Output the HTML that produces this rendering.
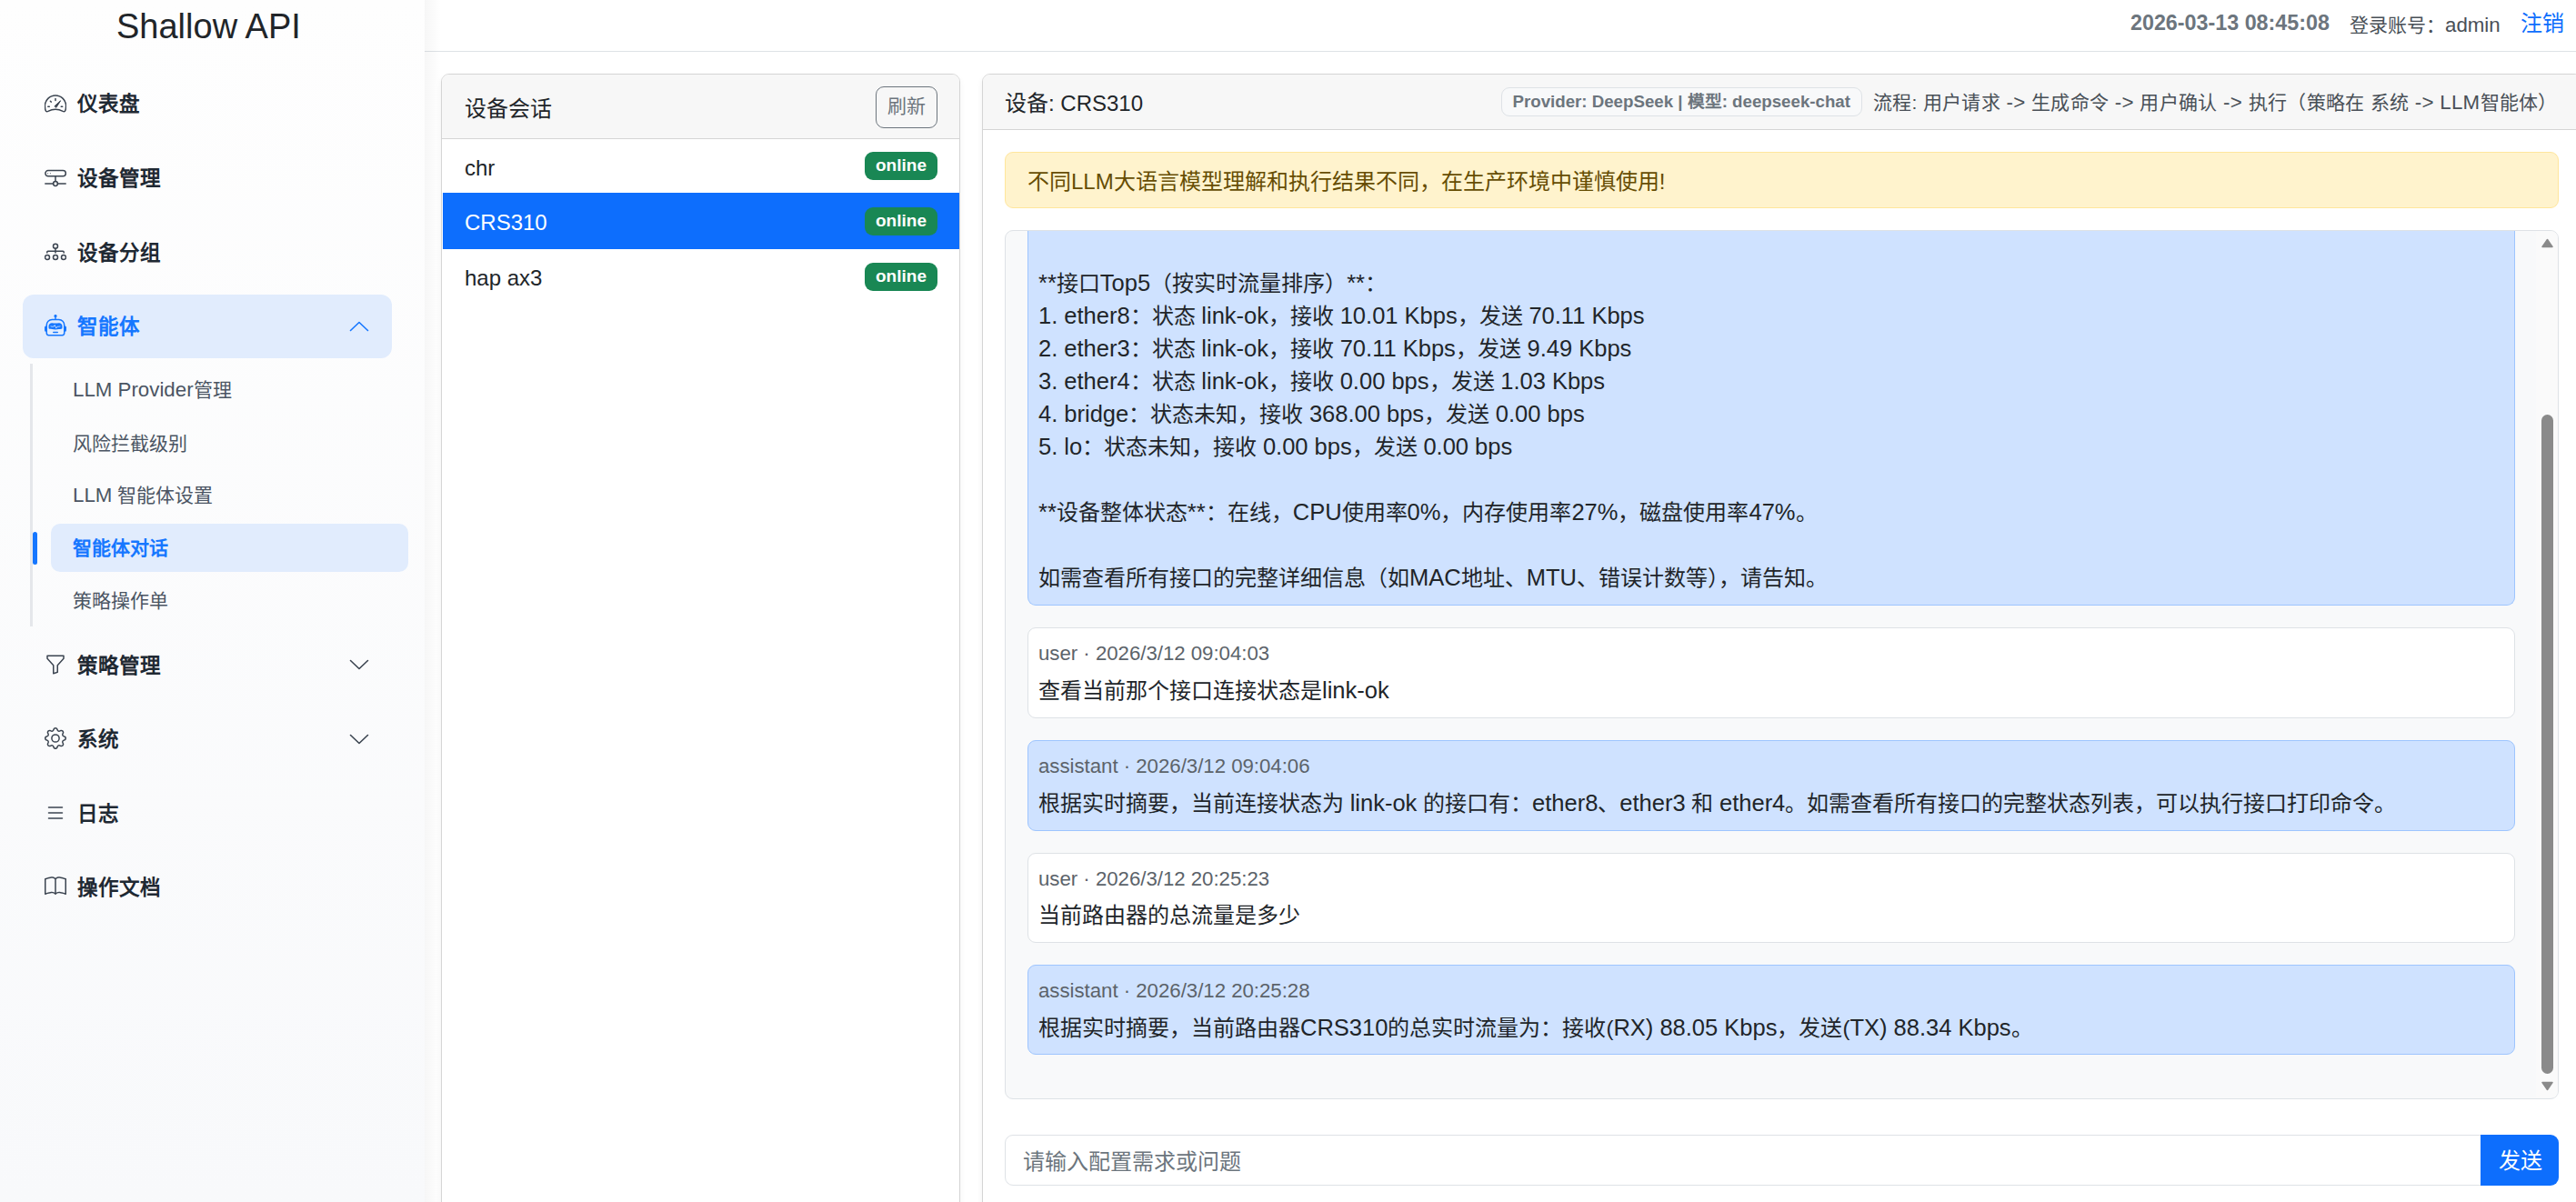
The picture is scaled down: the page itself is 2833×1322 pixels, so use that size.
<!DOCTYPE html>
<html lang="zh-CN"><head><meta charset="utf-8">
<style>
*{box-sizing:border-box;margin:0;padding:0}
html,body{width:2833px;height:1322px;overflow:hidden;background:#fff;font-family:"Liberation Sans",sans-serif;color:#212529}
.a{position:absolute}
.t{position:absolute;white-space:nowrap;line-height:1}
#sidebar{left:0;top:0;width:467px;height:1322px;background:linear-gradient(#fefefe,#f8f9fb)}
.nav{font-weight:bold;font-size:22.5px;color:#1f2933;left:85.3px}
.ico{position:absolute;left:49px;width:24px;height:24px;fill:none;stroke:#3b4450;stroke-width:1.5;stroke-linecap:round;stroke-linejoin:round}
.chev{position:absolute;left:384px;width:22px;height:12px;fill:none;stroke:#3b4450;stroke-width:1.6;stroke-linecap:round;stroke-linejoin:round}
.sub{font-size:21px;color:#4b5563;left:80px}
#header{left:467px;top:0;width:2366px;height:57px;background:#fff;border-bottom:1px solid #dee2e6}
.card{position:absolute;border:1.5px solid #d5d5d5;border-radius:9px;background:#fff;box-shadow:0 3px 6px rgba(0,0,0,.06);overflow:hidden}
.chd{position:absolute;left:0;top:0;right:0;background:#f7f7f7;border-bottom:1.5px solid #d5d5d5}
.badge{position:absolute;left:951px;width:80px;height:31px;background:#198754;border-radius:9px}
.badge span{position:absolute;left:12px;top:5px;font-weight:bold;font-size:19px;color:#fff;line-height:1;white-space:nowrap}
.row{position:absolute;left:1.5px;right:0;height:61px}
.msg{position:absolute;left:1130px;width:1636px;border:1.5px solid #9ec5fe;background:#cfe2ff;border-radius:9px}
.msg.u{background:#fff;border-color:#dee2e6}
.meta{position:absolute;left:11px;top:17px;font-size:22.2px;color:#5c636a;white-space:nowrap;line-height:1}
.l{font-size:1.0625em;line-height:0}
.bd{position:absolute;left:11px;top:56.5px;font-size:24px;color:#212529;white-space:nowrap;line-height:1}
</style></head><body>
<div id="sidebar" class="a">
  <div class="t" style="left:128px;top:10px;font-size:38px;color:#212529">Shallow API</div>

  <svg class="ico" style="top:102px" viewBox="0 0 24 24"><path d="M1.6 20.2C.6 18.8.4 16.6.4 14.6A11.6 11.6 0 0 1 23.6 14.6c0 2-.2 4.2-1.2 5.6-.6.6-1.4.6-2.2.2C17.6 19 15 18.2 12 18.2s-5.6.8-8.2 2.2c-.8.4-1.6.4-2.2-.2z"/><path d="M12 6.6v2M6.4 9.3l.9.8M3.8 15.3h1.5M18.2 15.3h1.5"/><path d="M11.2 14.6 17.6 8.8 13 16z" fill="#3b4450" stroke-width="1"/></svg>
  <div class="t nav" style="top:104px">仪表盘</div>

  <svg class="ico" style="top:183px" viewBox="0 0 24 24"><rect x="0.9" y="4.6" width="22.4" height="6.2" rx="3"/><circle cx="3.6" cy="7.7" r=".55" fill="#3b4450" stroke="none"/><circle cx="6.4" cy="7.7" r=".55" fill="#3b4450" stroke="none"/><path d="M12 10.8v5.6M.8 19h8.8M14.4 19h8.8"/><circle cx="12" cy="19" r="2.4"/></svg>
  <div class="t nav" style="top:185.5px">设备管理</div>

  <svg class="ico" style="top:265px" viewBox="0 0 24 24"><circle cx="12" cy="5.8" r="2.5"/><path d="M12 8.3v4.6M2.8 13v-.8a1 1 0 0 1 1-1h16.4a1 1 0 0 1 1 1v.8"/><circle cx="3" cy="18" r="2.5"/><circle cx="12" cy="18" r="2.5"/><circle cx="21" cy="18" r="2.5"/></svg>
  <div class="t nav" style="top:267.5px">设备分组</div>

  <div class="a" style="left:25px;top:324px;width:406px;height:70px;background:#e1ecfd;border-radius:12px"></div>
  <svg class="ico" style="top:346px;height:25px;fill:#1677ff;stroke:none" viewBox="0 0 16 16" preserveAspectRatio="none"><path d="M6 12.5a.5.5 0 0 1 .5-.5h3a.5.5 0 0 1 0 1h-3a.5.5 0 0 1-.5-.5M3 8.062C3 6.76 4.235 5.765 5.53 5.886a26.6 26.6 0 0 0 4.94 0C11.765 5.765 13 6.76 13 8.062v1.157a.93.93 0 0 1-.765.935c-.845.147-2.34.346-4.235.346s-3.39-.2-4.235-.346A.93.93 0 0 1 3 9.219zm4.542-.827a.25.25 0 0 0-.217.068l-.92.9a25 25 0 0 1-1.871-.183.25.25 0 0 0-.068.495c.55.076 1.232.149 2.02.193a.25.25 0 0 0 .189-.071l.754-.736.847 1.71a.25.25 0 0 0 .404.062l.932-.97a25 25 0 0 0 1.922-.188.25.25 0 0 0-.068-.495c-.538.074-1.207.145-1.98.189a.25.25 0 0 0-.166.076l-.754.785-.842-1.7a.25.25 0 0 0-.182-.135"/><path d="M8.5 1.866a1 1 0 1 0-1 0V3h-2A4.5 4.5 0 0 0 1 7.5V8a1 1 0 0 0-1 1v2a1 1 0 0 0 1 1v1a2 2 0 0 0 2 2h10a2 2 0 0 0 2-2v-1a1 1 0 0 0 1-1V9a1 1 0 0 0-1-1v-.5A4.5 4.5 0 0 0 10.5 3h-2zM14 7.5V13a1 1 0 0 1-1 1H3a1 1 0 0 1-1-1V7.5A3.5 3.5 0 0 1 5.5 4h5A3.5 3.5 0 0 1 14 7.5"/></svg>
  <div class="t nav" style="top:349px;color:#1677ff">智能体</div>
  <svg class="chev" style="top:353px;stroke:#1677ff" viewBox="0 0 22 12"><path d="M1.5 10.5 11 1.5l9.5 9"/></svg>

  <div class="a" style="left:33px;top:400px;width:3px;height:289px;background:#e5e7eb"></div>
  <div class="t sub" style="top:418px"><span class="l">LLM Provider</span>管理</div>
  <div class="t sub" style="top:476.5px">风险拦截级别</div>
  <div class="t sub" style="top:534px"><span class="l">LLM</span> 智能体设置</div>
  <div class="a" style="left:56px;top:576px;width:393px;height:53px;background:#e1ecfd;border-radius:10px"></div>
  <div class="a" style="left:36px;top:585px;width:5px;height:36px;background:#1677ff;border-radius:3px"></div>
  <div class="t sub" style="top:592px;color:#1677ff;font-weight:bold">智能体对话</div>
  <div class="t sub" style="top:650px">策略操作单</div>

  <svg class="ico" style="top:719.2px;fill:#3b4450;stroke:none" viewBox="0 0 16 16"><path d="M1.5 1.5A.5.5 0 0 1 2 1h12a.5.5 0 0 1 .5.5v2a.5.5 0 0 1-.128.334L10 8.692V13.5a.5.5 0 0 1-.342.474l-3 1A.5.5 0 0 1 6 14.5V8.692L1.628 3.834A.5.5 0 0 1 1.5 3.5zm1 .5v1.308l4.372 4.858A.5.5 0 0 1 7 8.5v5.306l2-.666V8.5a.5.5 0 0 1 .128-.334L13.5 3.308V2z"/></svg>
  <div class="t nav" style="top:721.5px">策略管理</div>
  <svg class="chev" style="top:725px" viewBox="0 0 22 12"><path d="M1.5 1.5 11 10.5l9.5-9"/></svg>

  <svg class="ico" style="top:800px;fill:#3b4450;stroke:none" viewBox="0 0 16 16"><path d="M8 4.754a3.246 3.246 0 1 0 0 6.492 3.246 3.246 0 0 0 0-6.492M5.754 8a2.246 2.246 0 1 1 4.492 0 2.246 2.246 0 0 1-4.492 0"/><path d="M9.796 1.343c-.527-1.79-3.065-1.79-3.592 0l-.094.319a.873.873 0 0 1-1.255.52l-.292-.16c-1.64-.892-3.433.902-2.54 2.541l.159.292a.873.873 0 0 1-.52 1.255l-.319.094c-1.79.527-1.790 3.065 0 3.592l.319.094a.873.873 0 0 1 .52 1.255l-.16.292c-.892 1.64.901 3.434 2.541 2.54l.292-.159a.873.873 0 0 1 1.255.52l.094.319c.527 1.79 3.065 1.79 3.592 0l.094-.319a.873.873 0 0 1 1.255-.52l.292.16c1.64.893 3.434-.902 2.54-2.541l-.159-.292a.873.873 0 0 1 .52-1.255l.319-.094c1.79-.527 1.79-3.065 0-3.592l-.319-.094a.873.873 0 0 1-.52-1.255l.16-.292c.893-1.64-.902-3.433-2.541-2.54l-.292.159a.873.873 0 0 1-1.255-.52zm-2.633.283c.246-.835 1.428-.835 1.674 0l.094.319a1.873 1.873 0 0 0 2.693 1.115l.291-.16c.764-.415 1.6.42 1.184 1.185l-.159.292a1.873 1.873 0 0 0 1.116 2.692l.318.094c.835.246.835 1.428 0 1.674l-.319.094a1.873 1.873 0 0 0-1.115 2.693l.16.291c.415.764-.42 1.6-1.185 1.184l-.291-.159a1.873 1.873 0 0 0-2.693 1.116l-.094.318c-.246.835-1.428.835-1.674 0l-.094-.319a1.873 1.873 0 0 0-2.692-1.115l-.292.16c-.764.415-1.6-.42-1.184-1.185l.159-.291A1.873 1.873 0 0 0 1.945 8.930l-.319-.094c-.835-.246-.835-1.428 0-1.674l.319-.094A1.873 1.873 0 0 0 3.060 4.377l-.16-.292c-.415-.764.42-1.6 1.185-1.184l.292.159a1.873 1.873 0 0 0 2.692-1.115z"/></svg>
  <div class="t nav" style="top:803px">系统</div>
  <svg class="chev" style="top:806.5px" viewBox="0 0 22 12"><path d="M1.5 1.5 11 10.5l9.5-9"/></svg>

  <svg class="ico" style="top:882px;fill:#3b4450;stroke:none" viewBox="0 0 16 16"><path fill-rule="evenodd" d="M2.5 12a.5.5 0 0 1 .5-.5h10a.5.5 0 0 1 0 1H3a.5.5 0 0 1-.5-.5m0-4a.5.5 0 0 1 .5-.5h10a.5.5 0 0 1 0 1H3a.5.5 0 0 1-.5-.5m0-4a.5.5 0 0 1 .5-.5h10a.5.5 0 0 1 0 1H3a.5.5 0 0 1-.5-.5"/></svg>
  <div class="t nav" style="top:884.5px">日志</div>

  <svg class="ico" style="top:962.8px;fill:#3b4450;stroke:none" viewBox="0 0 16 16"><path d="M1 2.828c.885-.37 2.154-.769 3.388-.893 1.33-.134 2.458.063 3.112.752v9.746c-.935-.53-2.12-.603-3.213-.493-1.18.12-2.37.461-3.287.811zm7.5-.141c.654-.689 1.782-.886 3.112-.752 1.234.124 2.503.523 3.388.893v9.923c-.918-.35-2.107-.692-3.287-.81-1.094-.111-2.278-.039-3.213.492zM8 1.783C7.015.936 5.587.81 4.287.94c-1.514.153-3.042.672-3.994 1.105A.5.5 0 0 0 0 2.5v11a.5.5 0 0 0 .707.455c.882-.4 2.303-.881 3.68-1.02 1.409-.142 2.59.087 3.223.877a.5.5 0 0 0 .78 0c.633-.79 1.814-1.019 3.222-.877 1.378.139 2.8.62 3.681 1.02A.5.5 0 0 0 16 13.5v-11a.5.5 0 0 0-.293-.455c-.952-.433-2.48-.952-3.994-1.105C10.413.809 8.985.936 8 1.783"/></svg>
  <div class="t nav" style="top:965.5px">操作文档</div>
</div>

<div class="a" style="left:467px;top:0;width:18px;height:1322px;background:linear-gradient(to right,rgba(0,0,0,.035),rgba(0,0,0,0));z-index:5"></div>
<div id="header" class="a">
  <div class="t" style="left:1876px;top:14.3px;font-size:23.3px;font-weight:bold;color:#6c757d">2026-03-13 08:45:08</div>
  <div class="t" style="left:2117px;top:17px;font-size:21px;color:#495057">登录账号：<span class="l">admin</span></div>
  <div class="t" style="left:2305px;top:14.3px;font-size:24px;color:#0d6efd">注销</div>
</div>

<!-- left card -->
<div class="card" style="left:485px;top:81px;width:571px;height:1300px">
  <div class="chd" style="height:71px"></div>
  <div class="t" style="left:24.5px;top:26px;font-size:24px">设备会话</div>
  <div class="a" style="left:477px;top:12.5px;width:68px;height:46px;border:1.5px solid #6c757d;border-radius:9px"></div>
  <div class="t" style="left:489.5px;top:23.5px;font-size:21px;color:#6c757d">刷新</div>
</div>
<div class="row a" style="left:486.5px;top:152px;width:568px;height:60px"></div>
<div class="t" style="left:511px;top:173px;font-size:24px">chr</div>
<div class="a" style="left:486.5px;top:212px;width:568px;height:62px;background:#0d6efd"></div>
<div class="t" style="left:511px;top:233px;font-size:24px;color:#fff">CRS310</div>
<div class="t" style="left:511px;top:294px;font-size:24px">hap ax3</div>
<div class="badge" style="top:167px"><span>online</span></div>
<div class="badge" style="top:228px"><span>online</span></div>
<div class="badge" style="top:289px"><span>online</span></div>

<!-- right card -->
<div class="card" style="left:1080px;top:81px;width:1760px;height:1300px">
  <div class="chd" style="height:60.5px"></div>
</div>
<div class="t" style="left:1105px;top:101.5px;font-size:24px">设备: CRS310</div>
<div class="a" style="left:1650.5px;top:96px;width:397px;height:31.5px;background:#f8f9fa;border:1.5px solid #dee2e6;border-radius:9px"></div>
<div class="t" style="left:1663.5px;top:103px;font-size:18.7px;font-weight:bold;color:#6c757d">Provider: DeepSeek | 模型: deepseek-chat</div>
<div class="t" style="left:2060px;top:102px;font-size:21px;letter-spacing:0.3px;color:#495057">流程: 用户请求<span class="l"> -&gt; </span>生成命令<span class="l"> -&gt; </span>用户确认<span class="l"> -&gt; </span>执行（策略在 系统<span class="l"> -&gt; </span><span class="l">LLM</span>智能体）</div>

<div class="a" style="left:1105px;top:167px;width:1709px;height:62px;background:#fff3cd;border:1.5px solid #ffe69c;border-radius:9px"></div>
<div class="t" style="left:1130px;top:187.5px;font-size:24px;color:#664d03">不同LLM大语言模型理解和执行结果不同，在生产环境中谨慎使用!</div>

<!-- messages container -->
<div class="a" style="left:1105px;top:253px;width:1709px;height:956px;background:#f8f9fa;border:1.5px solid #dee2e6;border-radius:9px;overflow:hidden">
  <div class="a" style="left:1683px;top:0;width:24px;height:953px;background:#fafafa"></div>
</div>
<div class="msg" style="top:220px;height:446px;border-top:none;border-radius:0 0 9px 9px;clip-path:inset(34px -2px -2px -2px)"></div>
<div class="a" style="left:1130px;top:253px;width:1640px;height:420px;overflow:hidden">
<div class="a" style="left:12px;top:5px;font-size:24px;line-height:36px;white-space:pre;color:#212529">
<span class="l">**</span>接口<span class="l">Top5</span>（按实时流量排序）<span class="l">**</span>：
<span class="l">1. ether8</span>：状态 <span class="l">link-ok</span>，接收 <span class="l">10.01 Kbps</span>，发送 <span class="l">70.11 Kbps</span>
<span class="l">2. ether3</span>：状态 <span class="l">link-ok</span>，接收 <span class="l">70.11 Kbps</span>，发送 <span class="l">9.49 Kbps</span>
<span class="l">3. ether4</span>：状态 <span class="l">link-ok</span>，接收 <span class="l">0.00 bps</span>，发送 <span class="l">1.03 Kbps</span>
<span class="l">4. bridge</span>：状态未知，接收 <span class="l">368.00 bps</span>，发送 <span class="l">0.00 bps</span>
<span class="l">5. lo</span>：状态未知，接收 <span class="l">0.00 bps</span>，发送 <span class="l">0.00 bps</span>

<span class="l">**</span>设备整体状态<span class="l">**</span>：在线，<span class="l">CPU</span>使用率<span class="l">0%</span>，内存使用率<span class="l">27%</span>，磁盘使用率<span class="l">47%</span>。

如需查看所有接口的完整详细信息（如<span class="l">MAC</span>地址、<span class="l">MTU</span>、错误计数等），请告知。</div>
</div>

<div class="msg u" style="top:690px;height:100px"><div class="meta">user · 2026/3/12 09:04:03</div><div class="bd">查看当前那个接口连接状态是<span class="l">link-ok</span></div></div>
<div class="msg" style="top:814px;height:99.5px"><div class="meta">assistant · 2026/3/12 09:04:06</div><div class="bd">根据实时摘要，当前连接状态为 <span class="l">link-ok</span> 的接口有：<span class="l">ether8</span>、<span class="l">ether3</span> 和 <span class="l">ether4</span>。如需查看所有接口的完整状态列表，可以执行接口打印命令。</div></div>
<div class="msg u" style="top:937.5px;height:99.5px"><div class="meta">user · 2026/3/12 20:25:23</div><div class="bd">当前路由器的总流量是多少</div></div>
<div class="msg" style="top:1061px;height:99px"><div class="meta">assistant · 2026/3/12 20:25:28</div><div class="bd">根据实时摘要，当前路由器<span class="l">CRS310</span>的总实时流量为：接收(<span class="l">RX) 88.05 Kbps</span>，发送(<span class="l">TX) 88.34 Kbps</span>。</div></div>

<!-- scrollbar -->
<svg class="a" style="left:2795px;top:262px" width="13" height="11" viewBox="0 0 13 11"><path d="M6.5 1.5 12 9.5H1z" fill="#8a8a8a" stroke="#8a8a8a" stroke-linejoin="round" stroke-width="1.5"/></svg>
<div class="a" style="left:2795px;top:455.5px;width:13px;height:725.5px;background:#8a8a8a;border-radius:6.5px"></div>
<svg class="a" style="left:2795px;top:1189px" width="13" height="11" viewBox="0 0 13 11"><path d="M6.5 9.5 12 1.5H1z" fill="#8a8a8a" stroke="#8a8a8a" stroke-linejoin="round" stroke-width="1.5"/></svg>

<!-- input -->
<div class="a" style="left:1105px;top:1248px;width:1630px;height:55.5px;background:#fff;border:1.5px solid #dee2e6;border-radius:9px 0 0 9px"></div>
<div class="t" style="left:1124.5px;top:1265.5px;font-size:24px;color:#6c757d">请输入配置需求或问题</div>
<div class="a" style="left:2728px;top:1248px;width:86px;height:55.5px;background:#0d6efd;border-radius:0 9px 9px 0"></div>
<div class="t" style="left:2747.5px;top:1265px;font-size:24px;color:#fff">发送</div>
</body></html>
